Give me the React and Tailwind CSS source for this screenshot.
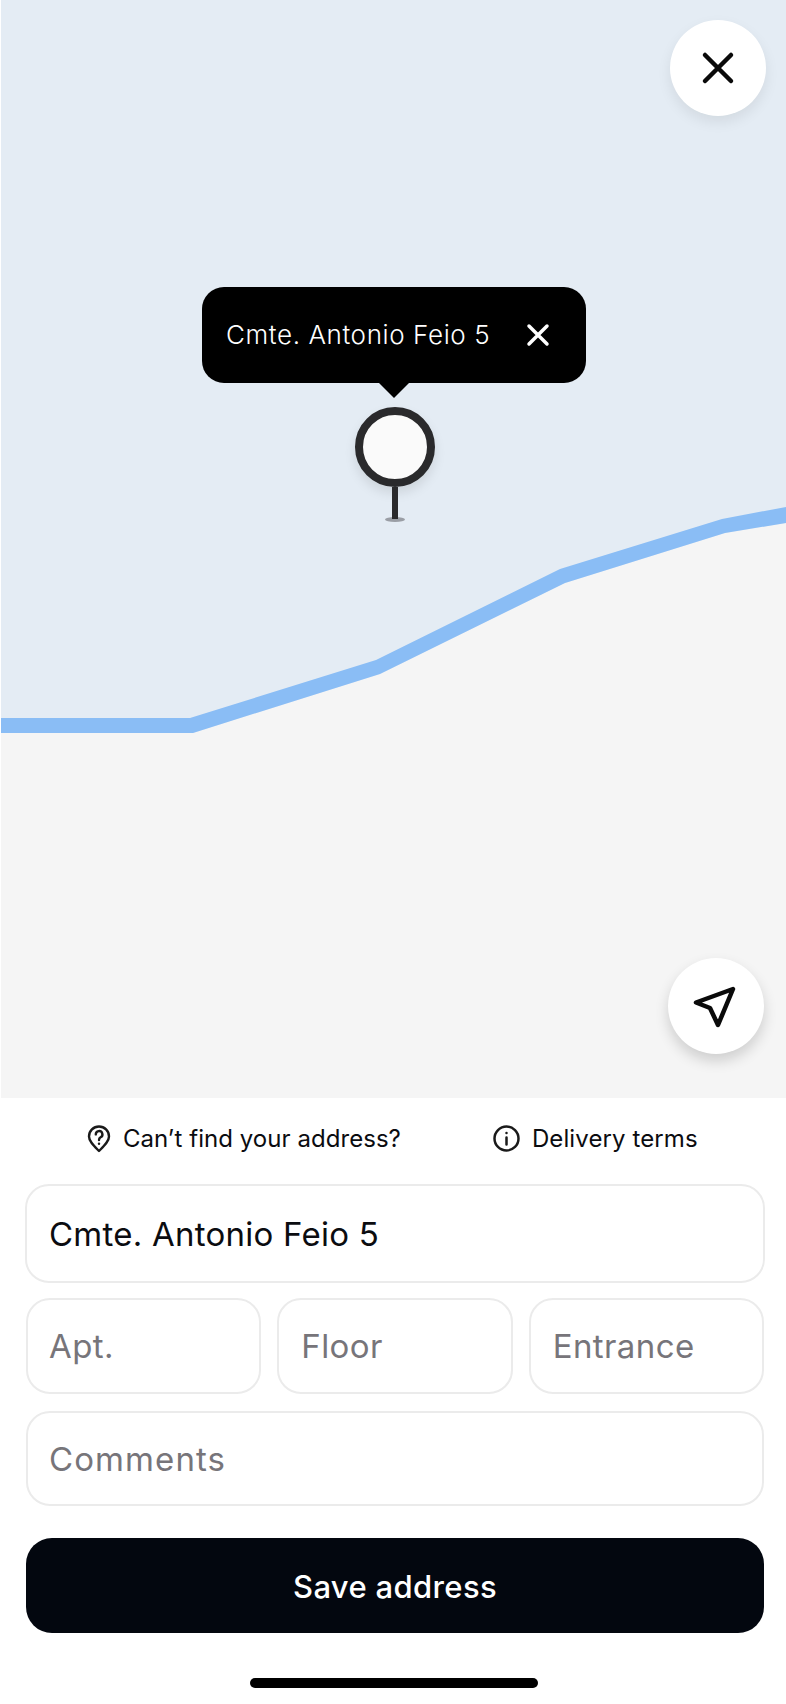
import React from 'react';

const font = "font-['Inter',sans-serif]";

function MapLayer() {
  // water above, land below, the shore line between them
  return (
    <svg className="absolute inset-0 h-full w-full" viewBox="0 0 785 1098" preserveAspectRatio="none">
      <polygon points="0,733 192,733 379,674 564,583 724,533 785,523 785,1098 0,1098" fill="#f5f5f5" />
      <polygon points="0,718 189,718 375,660 559,569 721,519 785,507 785,523 724,533 564,583 379,674 192,733 0,733" fill="#8abdf5" />
    </svg>
  );
}

function RoundButton({ className, children }) {
  return (
    <button className={`absolute flex h-24 w-24 items-center justify-center rounded-full bg-white ${className}`}>
      {children}
    </button>
  );
}

function AddressPin() {
  return (
    <div className="absolute left-[201px] top-[287px] flex w-[384px] flex-col items-center">
      <div className="flex h-24 w-full items-center justify-between rounded-[22px] bg-black pl-[24px] pr-[36px] pb-[1px]">
        <span className="text-[26px] font-light tracking-[0.6px] text-white">Cmte. Antonio Feio 5</span>
        <svg width="24" height="24" viewBox="0 0 24 24" fill="none" stroke="white" strokeWidth="3.5" strokeLinecap="round">
          <path d="M3 3 L21 21 M21 3 L3 21" />
        </svg>
      </div>
      <div className="h-0 w-0 border-x-[15px] border-t-[15px] border-x-transparent border-t-black" />
      <div className="ml-[2px] mt-[9px] h-20 w-20 rounded-full border-8 border-[#2a2a2c] bg-[#fafafa] shadow-[0_6px_12px_rgba(0,0,0,0.1)]" />
      <div className="z-10 ml-[2px] h-[32px] w-[6px] bg-[#2a2a2c]" />
      <div className="ml-[2px] -mt-[2px] h-[5px] w-5 rounded-[50%] bg-[#9a9ea5]" />
    </div>
  );
}

function Field({ placeholder, defaultValue, className = '' }) {
  return (
    <input
      readOnly
      placeholder={placeholder}
      defaultValue={defaultValue}
      className={`min-w-0 rounded-[24px] border-2 border-[#ebebeb] bg-white text-[33px] text-[#0b0c10] outline-none placeholder:text-[#77757a] ${className}`}
    />
  );
}

export default function App() {
  return (
    <div className={`relative h-[1704px] w-[786px] overflow-hidden bg-white ${font}`}>
      <div className="relative ml-[1px] h-[1098px] bg-[#e4ecf4]">
        <MapLayer />
        <AddressPin />
        <RoundButton className="left-[669px] top-[20px] shadow-[0_6px_14px_rgba(0,0,0,0.08)]">
          <svg width="34" height="34" viewBox="0 0 34 34" fill="none" stroke="#0a0a0a" strokeWidth="4.5" strokeLinecap="round">
            <path d="M4 4 L30 30 M30 4 L4 30" />
          </svg>
        </RoundButton>
        <RoundButton className="left-[667px] top-[958px] shadow-[0_7px_14px_rgba(0,0,0,0.16)]">
          <svg className="translate-x-[-1px] translate-y-[1px]" width="48" height="48" viewBox="0 0 48 48" fill="none" stroke="#0a0a0a" strokeWidth="4.5" strokeLinejoin="round">
            <path d="M42 6 L27 42 L19 25 L5 19.5 Z" />
          </svg>
        </RoundButton>
      </div>

      <div className="flex h-[86px] items-center pb-[5px] pl-[87px] text-[24px] tracking-[0.05px] text-[#0b0c10]">
        <svg width="24" height="28" viewBox="0 0 24 28" fill="none" stroke="#1a1a1a" strokeWidth="2.4" strokeLinecap="round" strokeLinejoin="round">
          <path d="M12 26 C7 21 2 16.5 2 11.5 A10 10 0 0 1 22 11.5 C22 16.5 17 21 12 26 Z" />
          <path d="M8.8 9.4 A3.3 3.3 0 1 1 13.6 12.3 C12.4 13 12 13.6 12 15" />
          <path d="M12 18.6 L12 18.7" />
        </svg>
        <span className="ml-[12px]">Can’t find your address?</span>
        <svg className="ml-[92px]" width="27" height="27" viewBox="0 0 27 27" fill="none" stroke="#1a1a1a" strokeWidth="2.5" strokeLinecap="round">
          <circle cx="13.5" cy="13.5" r="12" />
          <path d="M13.5 12.5 L13.5 19.5 M13.5 8 L13.5 8.1" />
        </svg>
        <span className="ml-[12px] tracking-[0.1px]">Delivery terms</span>
      </div>

      <div className="flex flex-col pl-[25px] pr-[21px]">
        <Field defaultValue="Cmte. Antonio Feio 5" className="h-[99px] w-full pl-[22px] pr-[21px] tracking-[0.25px]" />
        <div className="mx-[1px] mt-[15px] grid grid-cols-3 gap-[16px]">
          <Field placeholder="Apt." className="h-[96px] px-[21px] tracking-[0.4px]" />
          <Field placeholder="Floor" className="h-[96px] px-[22px] tracking-[0.4px]" />
          <Field placeholder="Entrance" className="h-[96px] px-[22px] tracking-[0.4px]" />
        </div>
        <Field placeholder="Comments" className="mx-[1px] mt-[17px] h-[95px] px-[21px] tracking-[1.1px]" />
        <button className="mx-[1px] mt-[32px] h-[95px] rounded-[26px] bg-[#03070f] pt-[3px] text-[31px] font-medium tracking-[0.35px] text-white">
          Save address
        </button>
      </div>

      <div className="ml-[250px] mt-[45px] h-[10px] w-[288px] rounded-full bg-black" />
    </div>
  );
}
